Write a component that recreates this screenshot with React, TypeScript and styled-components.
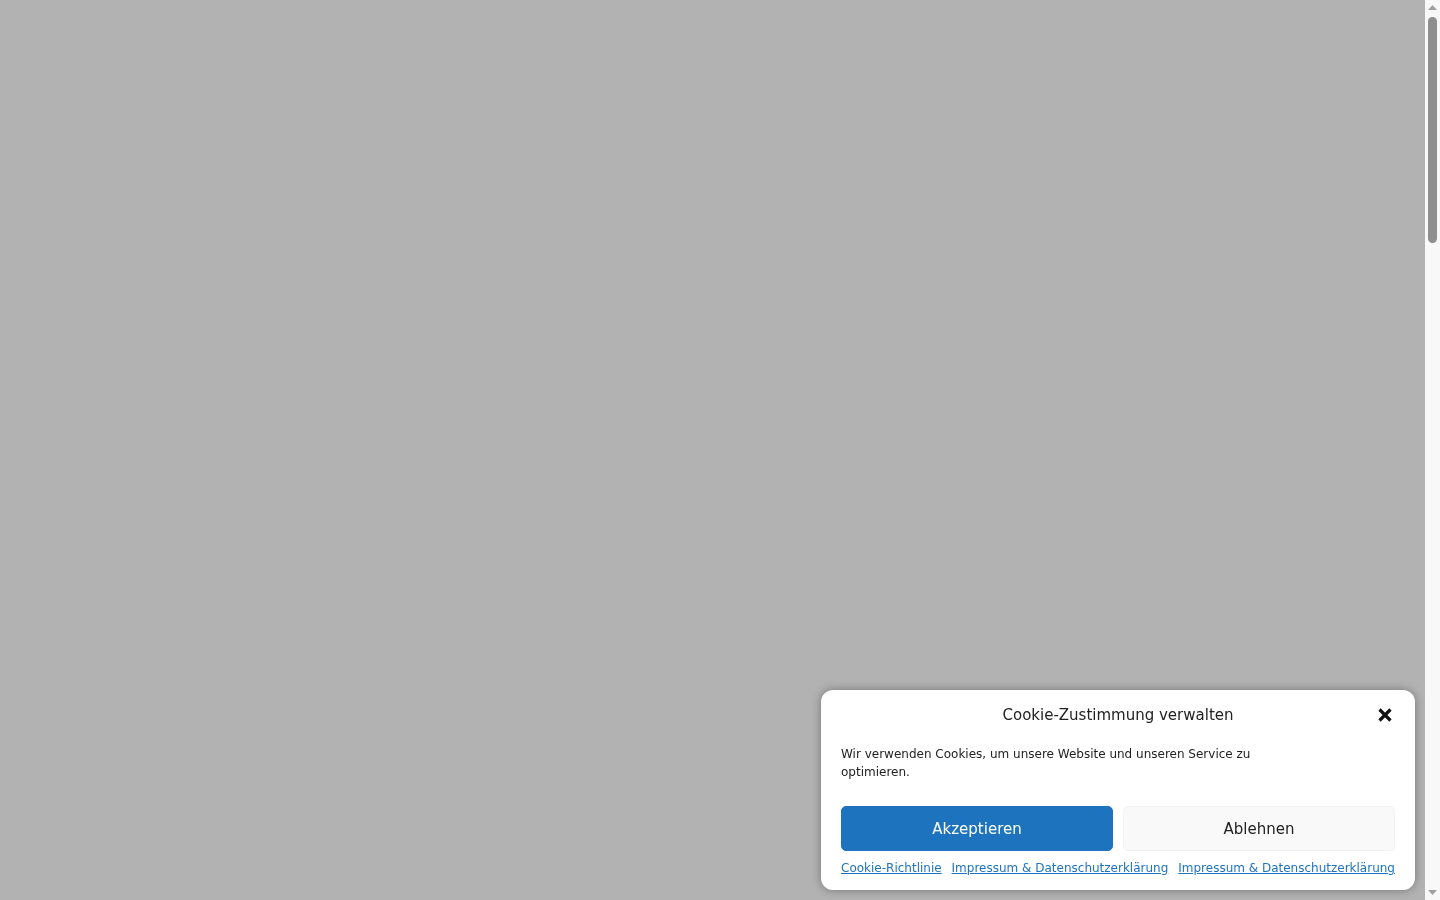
import * as React from 'react';
import styled, { createGlobalStyle } from 'styled-components';

const GlobalStyle = createGlobalStyle`
    html, body {
        margin: 0;
        padding: 0;
        overflow: hidden;
        font-family: "DejaVu Sans", Verdana, sans-serif;
    }
`;

const Viewport = styled.div`
    display: flex;
    height: 100vh;
`;

const Overlay = styled.main`
    flex: 1;
    background: #b2b2b2;
`;

const ScrollTrack = styled.div`
    width: 15px;
    background: #f8f8f8;
    display: flex;
    flex-direction: column;
    align-items: center;
`;

const ScrollArrow = styled.div<{ $down?: boolean }>`
    height: 15px;
    width: 15px;
    display: flex;
    align-items: center;
    justify-content: center;
    margin-top: ${p => (p.$down ? 'auto' : '0')};
`;

const ScrollThumb = styled.div`
    margin-top: 2px;
    width: 9px;
    height: 226px;
    border-radius: 5px;
    background: #8f8f8f;
`;

const Banner = styled.div`
    position: fixed;
    right: 25px;
    bottom: 10px;
    width: 594px;
    box-sizing: border-box;
    padding: 13px 20px 13px;
    background: #fff;
    border-radius: 12px;
    box-shadow: 0 0 10px rgba(0, 0, 0, 0.35);
    display: flex;
    flex-direction: column;
    color: #222;
`;

const Header = styled.div`
    position: relative;
    height: 24px;
    display: flex;
    align-items: center;
    justify-content: center;
`;

const Title = styled.div`
    font-size: 15px;
    line-height: 24px;
    color: #222;
`;

const Close = styled.button`
    position: absolute;
    right: 1px;
    top: 3px;
    width: 18px;
    height: 18px;
    padding: 0;
    border: 0;
    background: transparent;
    cursor: pointer;
    display: flex;
    align-items: center;
    justify-content: center;
`;

const Message = styled.p`
    margin: 18px 0 0;
    font-size: 12px;
    line-height: 18px;
    max-width: 430px;
    color: #222;
`;

const Buttons = styled.div`
    margin-top: 25px;
    display: grid;
    grid-template-columns: 1fr 1fr;
    gap: 10px;
`;

const Button = styled.button<{ $primary?: boolean }>`
    height: 45px;
    border-radius: 5px;
    font-family: inherit;
    font-size: 15px;
    cursor: pointer;
    background: ${p => (p.$primary ? '#1e73be' : '#f9f9f9')};
    color: ${p => (p.$primary ? '#fff' : '#222')};
    border: 1px solid ${p => (p.$primary ? '#1e73be' : '#f2f2f2')};
`;

const Links = styled.div`
    margin-top: 8px;
    display: flex;
    justify-content: space-between;
    line-height: 18px;
    white-space: nowrap;
`;

const Link = styled.a`
    font-size: 12px;
    color: #1e73be;
    text-decoration: underline;
`;

export default function App() {
    return (
        <>
            <GlobalStyle />
            <Viewport>
                <Overlay />
                <ScrollTrack>
                    <ScrollArrow>
                        <svg width="9" height="5" viewBox="0 0 9 5">
                            <path d="M0 5 L4.5 0 L9 5 Z" fill="#a0a0a0" />
                        </svg>
                    </ScrollArrow>
                    <ScrollThumb />
                    <ScrollArrow $down>
                        <svg width="9" height="5" viewBox="0 0 9 5">
                            <path d="M0 0 L4.5 5 L9 0 Z" fill="#a0a0a0" />
                        </svg>
                    </ScrollArrow>
                </ScrollTrack>
            </Viewport>
            <Banner>
                <Header>
                    <Title>Cookie-Zustimmung verwalten</Title>
                    <Close aria-label="Schließen">
                        <svg width="14" height="14" viewBox="0 0 14 14">
                            <path d="M1.5 1.5 L12.5 12.5 M12.5 1.5 L1.5 12.5" stroke="#111" strokeWidth="3.2" />
                        </svg>
                    </Close>
                </Header>
                <Message>Wir verwenden Cookies, um unsere Website und unseren Service zu optimieren.</Message>
                <Buttons>
                    <Button $primary>Akzeptieren</Button>
                    <Button>Ablehnen</Button>
                </Buttons>
                <Links>
                    <Link href="#">Cookie-Richtlinie</Link>
                    <Link href="#">Impressum &amp; Datenschutzerklärung</Link>
                    <Link href="#">Impressum &amp; Datenschutzerklärung</Link>
                </Links>
            </Banner>
        </>
    );
}
